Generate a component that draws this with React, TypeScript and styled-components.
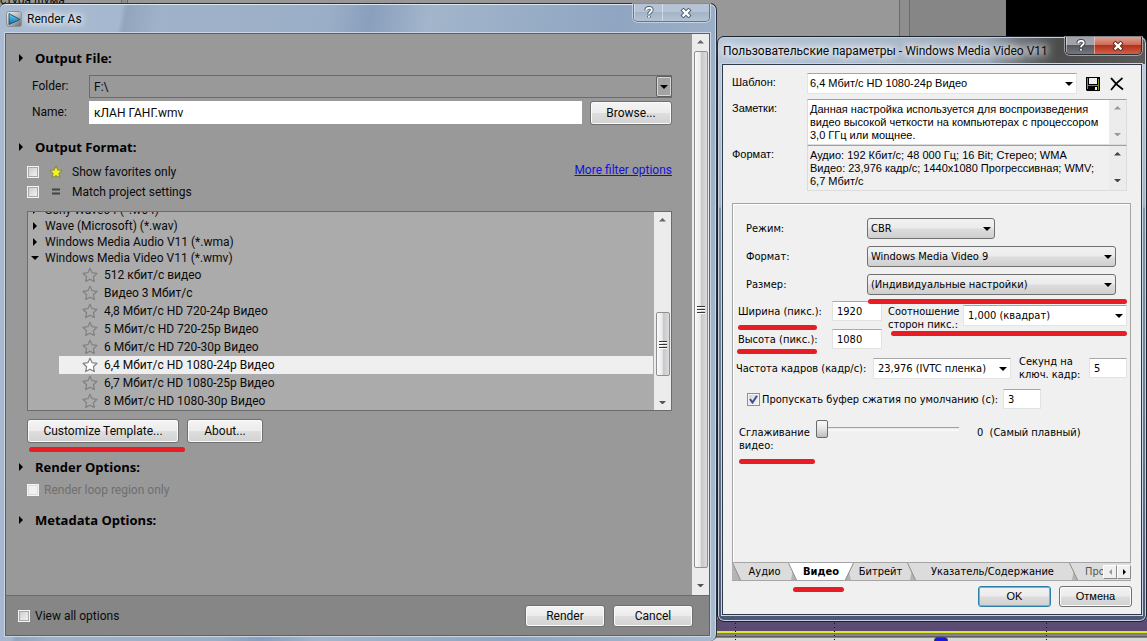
import React from "react";
import styled, { createGlobalStyle, css } from "styled-components";

const uiFont = `Roboto, "Open Sans", sans-serif`;
const headingFont = `"Open Sans", "Noto Sans", sans-serif`;
const dialogFont = `"DejaVu Sans Condensed", "DejaVu Sans", sans-serif`;
const shellFont = `"Liberation Sans", Arial, sans-serif`;

const GlobalStyle = createGlobalStyle`
  * { box-sizing: border-box; }
  html, body { margin: 0; padding: 0; }
  body { font-family: ${uiFont}; font-size: 12px; color: #0a0a0a; background: #999; }
  button, input, select, textarea { font: inherit; color: inherit; margin: 0; border-radius: 0; }
  h1, h2, p, ul { margin: 0; padding: 0; font-size: inherit; font-weight: inherit; }
  ul { list-style: none; }
  svg { display: block; flex: none; }
`;

/* ---------- desktop and the editor behind the dialogs ---------- */

const Desktop = styled.div`
  display: grid;
  grid-template-columns: minmax(0, 1fr) 430px;
  min-height: 100vh;
  overflow: hidden;
`;

const Backdrop = styled.div`
  grid-area: 1 / 1 / 2 / 3;
  display: flex;
  flex-direction: column;
  overflow: hidden;
`;

const Panes = styled.div`
  flex: 1;
  display: flex;
  background: #989898;
`;

const SidePane = styled.div`
  width: 121px;
  height: 4px;
  overflow: hidden;
  display: flex;
  align-items: flex-end;
  font-size: 12px;
  line-height: 8px;
  white-space: nowrap;
`;

const Splitter = styled.div<{ $wide?: boolean }>`
  width: ${(p) => (p.$wide ? 11 : 7)}px;
  border: solid #6c6c6c;
  border-width: 0 1px;
  background: #8e8e8e;
`;

const MainPane = styled.div`
  flex: 1;
`;

const DimPane = styled.div`
  width: 96px;
  background: #868686;
`;

const Preview = styled.div`
  width: 141px;
  background: linear-gradient(#000 45%, #16233a 46%, #8ea2bd 60%, #6d7ba0);
`;

const Timeline = styled.div`
  height: 22px;
  background: linear-gradient(#5c4b74 12px, #e2e62a 12px, #e2e62a 14px, #77757a 14px, #8b8b8b 17px, #333 18px, #d8d8d8 19px);
  display: flex;
  justify-content: flex-end;
`;

const TimelineMarks = styled.div`
  width: 430px;
  display: flex;
  align-items: flex-end;
  padding: 0 100px 0 18px;
  justify-content: space-between;
`;

const Tick = styled.div`
  width: 1px;
  height: 22px;
  background: repeating-linear-gradient(#111 0 1px, transparent 1px 4px);
`;

const Playhead = styled.div`
  width: 14px;
  height: 4px;
  border-radius: 6px 6px 0 0;
  background: #1818e0;
  border: 1px solid #444;
  border-bottom: 0;
`;

/* ---------- window chrome ---------- */

const RenderWindow = styled.section`
  grid-area: 1 / 1 / 2 / 2;
  z-index: 1;
  margin-top: 3px;
  border: 1px solid #27303b;
  border-width: 1px 1px 0 0;
  border-radius: 6px 7px 7px 0;
  padding: 0 6px 5px 5px;
  display: flex;
  flex-direction: column;
  background: linear-gradient(100deg, #a9bcd1 0, #a5b8cf 120px, #93a5bd 126px, #a0b2c9 160px, #9aaec7 40%, #8a9fbd 45%, #a2b5cb 52%, #8fa5c1 75%, #a9bacf);
  box-shadow: inset 0 1px 0 #dfe8f2, inset -1px 0 0 #c9d6e4;
`;

const TemplateWindow = styled.section`
  grid-area: 1 / 2 / 2 / 3;
  z-index: 2;
  align-self: start;
  margin-top: 36px;
  border: 1px solid #1a222c;
  border-radius: 7px;
  padding: 0 4px 6px;
  background:
    linear-gradient(90deg, #b7c7d9 0, #a9b8c9 180px, #9aa8b8 270px, #70767d 300px, #4c4c4c 340px, #5a5a5a) top / 100% 27px no-repeat,
    linear-gradient(#b9cadb 27px, #9fb1c6 170px, #7d93ac 171px, #6a8098 60%, #4d5778);
  box-shadow: inset 0 0 0 1px #c5d0dc;
`;

const TitleBar = styled.header<{ $h: number; $pad: number }>`
  height: ${(p) => p.$h}px;
  padding-left: ${(p) => p.$pad}px;
  display: flex;
  align-items: center;
  gap: 5px;
`;

const Title = styled.h1`
  flex: 1;
  align-self: center;
  font-size: 12px;
  line-height: 16px;
  white-space: nowrap;
  text-shadow: 0 0 6px #fff, 0 0 8px #fff, 0 0 12px #fff;
`;

const Caption = styled.div<{ $dark?: boolean }>`
  align-self: flex-start;
  display: flex;
  height: 18px;
  border: 1px solid ${(p) => (p.$dark ? "#2d3035" : "#65758a")};
  border-top: 0;
  border-radius: 0 0 5px 5px;
  overflow: hidden;
  box-shadow: 0 0 0 1px rgba(255, 255, 255, 0.45);
`;

const captionFill = {
  glass: "linear-gradient(#b5c3d4 45%, #a3b4c8 50%, #b3c3d5)",
  dark: "linear-gradient(#a0a4aa 45%, #55585d 50%, #74787e)",
  red: "linear-gradient(#e0a090 0, #cc6c58 45%, #b3301a 50%, #d2604a)",
};

const CaptionButton = styled.button<{ $fill: keyof typeof captionFill; $w: number }>`
  width: ${(p) => p.$w}px;
  padding: 0;
  border: 0;
  border-left: 1px solid rgba(255, 255, 255, 0.45);
  background: ${(p) => captionFill[p.$fill]};
  display: flex;
  align-items: center;
  justify-content: center;
`;

const Client = styled.div<{ $light?: boolean }>`
  flex: 1;
  display: flex;
  flex-direction: column;
  border: 1px solid ${(p) => (p.$light ? "#2f3a48" : "#59616b")};
  background: ${(p) => (p.$light ? "#f0f0f0" : "#999")};
  box-shadow: 0 0 0 1px #c8d6e6;
`;

/* ---------- shared pieces ---------- */

const Mark = styled.span<{ $top: number; $left: number; $right: number }>`
  position: absolute;
  z-index: 3;
  top: ${(p) => p.$top}px;
  left: ${(p) => p.$left}px;
  right: ${(p) => p.$right}px;
  height: 5px;
  border-radius: 3px;
  background: #e81c24;
  pointer-events: none;
`;

const Anchor = styled.div`
  position: relative;
  display: flex;
`;

const Track = styled.div<{ $framed?: boolean }>`
  width: 17px;
  flex: none;
  display: flex;
  flex-direction: column;
  align-items: center;
  justify-content: space-between;
  background: #ececec;
  padding: ${(p) => (p.$framed ? "6px 0" : "6px 0 8px")};
`;

const Thumb = styled.div<{ $grow?: boolean }>`
  width: 14px;
  ${(p) => (p.$grow ? "flex: 1; margin: 7px 0 16px;" : "height: 64px; margin: 66px 0 0;")}
  border: 1px solid #8f8f8f;
  border-radius: 2px;
  background: linear-gradient(90deg, #fafafa, #e9e9e9 45%, #c6c7ca 50%, #dcdcde);
  display: flex;
  align-items: center;
  justify-content: center;
`;

const Grip = () => (
  <svg width="8" height="9" viewBox="0 0 8 9" aria-hidden="true">
    <path d="M0 1.5h8M0 4.5h8M0 7.5h8" stroke="#333" />
    <path d="M0 2.5h8M0 5.5h8M0 8.5h8" stroke="#fff" />
  </svg>
);

const Arrow = ({ dir, color = "#000", size = 8 }: { dir: "up" | "down" | "right" | "left"; color?: string; size?: number }) => {
  const h = size / 2;
  if (dir === "up" || dir === "down")
    return (
      <svg width={size} height={h} viewBox="0 0 8 4" aria-hidden="true">
        <path d={dir === "up" ? "M0 4L4 0L8 4Z" : "M0 0H8L4 4Z"} fill={color} />
      </svg>
    );
  return (
    <svg width={h} height={size} viewBox="0 0 4 8" aria-hidden="true">
      <path d={dir === "right" ? "M0 0L4 4L0 8Z" : "M4 0L0 4L4 8Z"} fill={color} />
    </svg>
  );
};

const PushButton = styled.button<{ $w: number }>`
  min-width: ${(p) => p.$w}px;
  height: 24px;
  padding: 0 8px;
  border: 1px solid #707070;
  border-radius: 3px;
  background: linear-gradient(#f4f4f4, #ececec 48%, #dedede 52%, #d2d2d2);
  box-shadow: inset 0 0 0 1px #fbfbfb;
  line-height: 16px;
  white-space: nowrap;
`;

const Tick13 = styled.input`
  appearance: none;
  flex: none;
  width: 12px;
  height: 12px;
  border: 1px solid #f4f4f4;
  outline: 1px solid #a9a9a9;
  outline-offset: -2px;
  background: linear-gradient(135deg, #c9ccd0, #f4f4f4);
  &:disabled { background: #f0f2f2; outline-color: #dcdcdc; }
`;

/* ---------- Render As ---------- */

const ScrollPane = styled.div`
  flex: 1;
  display: flex;
`;

const RenderBody = styled.div`
  flex: 1;
  min-width: 0;
  padding: 15px 20px 0 13px;
`;

const SectionHead = styled.h2<{ $gap?: number }>`
  display: flex;
  align-items: center;
  gap: 12px;
  height: 18px;
  margin-top: ${(p) => p.$gap ?? 0}px;
  font-family: ${headingFont};
  font-size: 13px;
  line-height: 18px;
  font-weight: 700;
  color: #000;
`;

const SectionBody = styled.div<{ $gap: number }>`
  padding-left: 8px;
  margin-top: ${(p) => p.$gap}px;
`;

const FieldRow = styled.div`
  display: flex;
  height: 23px;
  margin-bottom: 3px;
  padding-left: 5px;
  &:last-child { margin-bottom: 0; }
`;

const FieldLabel = styled.label`
  width: 57px;
  line-height: 23px;
`;

const FolderBox = styled.div`
  position: relative;
  flex: 1;
  display: flex;
`;

const FolderSelect = styled.select`
  appearance: none;
  flex: 1;
  padding: 0 4px;
  border: 1px solid #6c6c6c;
  background: #999;
`;

const FolderDrop = styled.span`
  position: absolute;
  right: 0;
  top: 1px;
  bottom: 1px;
  width: 16px;
  border: 1px solid #5f5f5f;
  border-radius: 2px;
  box-shadow: inset 0 0 0 1px #d6d6d6;
  background: #a3a3a3;
  display: flex;
  align-items: center;
  justify-content: center;
  pointer-events: none;
`;

const NameInput = styled.input`
  flex: 1;
  min-width: 0;
  padding: 0 5px;
  border: 0;
  background: #fff;
  margin-right: 8px;
`;

const FilterBlock = styled.div`
  display: flex;
  justify-content: space-between;
  align-items: flex-start;
`;

const CheckRow = styled.label<{ $off?: boolean }>`
  display: flex;
  align-items: center;
  height: 20px;
  gap: 5px;
  line-height: 16px;
  color: ${(p) => (p.$off ? "#6f6f6f" : "inherit")};
`;

const IconSlot = styled.span`
  width: 18px;
  margin-left: 5px;
  padding-right: 4px;
  display: flex;
  justify-content: center;
`;

const FilterLink = styled.a`
  color: #1412d8;
  line-height: 17px;
`;

const TreeBox = styled.div`
  margin-top: 9px;
  height: 200px;
  display: flex;
  border: 1px solid #6c6c6c;
  background: #ababab;
  overflow: hidden;
`;

const Tree = styled.ul`
  flex: 1;
  margin-top: -10px;
  padding-right: 1px;
`;

const TreeGroup = styled.li`
  height: 16px;
  padding-left: 2px;
  display: flex;
  align-items: center;
  line-height: 16px;
`;

const Twisty = styled.span`
  width: 9px;
  margin-right: 6px;
  display: flex;
  justify-content: center;
`;

const TreeLeaf = styled.li<{ $on?: boolean }>`
  height: 18px;
  margin-left: 31px;
  padding-left: 23px;
  display: flex;
  align-items: center;
  gap: 6px;
  line-height: 18px;
  background: ${(p) => (p.$on ? "#efefef" : "transparent")};
`;

const ButtonRow = styled.div`
  display: flex;
  gap: 8px;
  margin-top: 8px;
`;

const RenderFooter = styled.footer`
  height: 40px;
  border-top: 1px solid #6b6b6b;
  background: #868686;
  padding: 0 16px 0 12px;
  display: flex;
  align-items: center;
  justify-content: space-between;
`;

const FooterButtons = styled.div`
  display: flex;
  gap: 8px;
  button { height: 22px; }
`;

/* ---------- template dialog ---------- */

const TemplateForm = styled.div`
  padding: 8px 10px 7px 9px;
  font-family: ${dialogFont};
  font-size: 11px;
  line-height: 13px;
  color: #000;
`;

const TopRow = styled.div<{ $gap?: number }>`
  display: flex;
  margin-top: ${(p) => p.$gap ?? 0}px;
  padding-right: 4px;
  font-family: ${shellFont};
`;

const TopLabel = styled.label`
  width: 75px;
  padding-top: 3px;
`;

const comboSkin = {
  flat: css`
    border: 1px solid #e4e4e4;
    border-top-color: #a6a6aa;
    background: #fff;
    font-family: inherit;
  `,
  raised: css`
    border: 1px solid #707070;
    border-radius: 3px;
    background: linear-gradient(#f2f2f2, #ebebeb 48%, #dddddd 52%, #cfcfcf);
  `,
};

const ComboBox = styled.div<{ $w?: number }>`
  position: relative;
  display: flex;
  height: 21px;
  ${(p) => (p.$w ? `width: ${p.$w}px;` : "flex: 1;")}
  svg { position: absolute; right: 4px; top: 9px; pointer-events: none; }
`;

const ComboSelect = styled.select<{ $skin: keyof typeof comboSkin; $pad?: number }>`
  appearance: none;
  flex: 1;
  min-width: 0;
  padding: 0 14px 0 ${(p) => p.$pad ?? 3}px;
  line-height: 13px;
  ${(p) => comboSkin[p.$skin]}
`;

const ToolButton = styled.button`
  width: 15px;
  height: 21px;
  margin-left: 9px;
  padding: 0;
  border: 0;
  background: none;
  display: flex;
  align-items: center;
  &:last-child { margin-right: 2px; }
`;

const MemoFrame = styled.div<{ $readonly?: boolean }>`
  flex: 1;
  height: 46px;
  display: flex;
  border: 1px solid #dcdcdc;
  border-top-color: #a0a0a4;
  background: ${(p) => (p.$readonly ? "#f0f0f0" : "#fff")};
`;

const Memo = styled.textarea`
  flex: 1;
  min-width: 0;
  padding: 3px 0 0 2px;
  border: 0;
  resize: none;
  overflow: hidden;
  background: transparent;
  line-height: 13px;
  white-space: pre;
`;

const TabPanel = styled.div`
  min-height: 360px;
  margin-top: 12px;
  border: 1px solid #a5a5a5;
  box-shadow: inset 1px 1px 0 #fff;
  padding: 14px 3px 0;
`;

const OptionRow = styled.div`
  display: flex;
  align-items: center;
  margin: 0 11px 7px 10px;
`;

const OptionLabel = styled.label`
  width: 121px;
`;

const SelectAnchor = styled(Anchor)`
  flex: 1;
`;

const SizeBlock = styled.div`
  display: flex;
  gap: 6px;
  margin-top: -1px;
  padding-left: 2px;
`;

const SizeColumn = styled.div`
  display: flex;
  flex-direction: column;
  gap: 8px;
`;

const SizeRow = styled.div`
  position: relative;
  display: flex;
  align-items: center;
`;

const SizeLabel = styled.label`
  width: 94px;
  white-space: nowrap;
`;

const NumberBox = styled.input<{ $w: number; $gap?: number }>`
  width: ${(p) => p.$w}px;
  height: 20px;
  margin-left: ${(p) => p.$gap ?? 0}px;
  padding: 0 4px;
  border: 1px solid #e2e2e2;
  border-top-color: #a9a9ad;
  background: #fff;
`;

const AspectGroup = styled.div`
  position: relative;
  align-self: flex-start;
  flex: 1;
  display: flex;
  align-items: flex-start;
  margin-top: 4px;
`;

const TwoLine = styled.label<{ $w: number }>`
  width: ${(p) => p.$w}px;
  white-space: pre;
`;

const RateRow = styled.div`
  display: flex;
  align-items: center;
  margin-top: 6px;
`;

const RateLabel = styled.label`
  flex: 1;
  white-space: nowrap;
`;

const BufferRow = styled.div`
  display: flex;
  align-items: center;
  margin: 8px 0 10px 11px;
`;

const BufferLabel = styled.label`
  width: 243px;
  padding-left: 2px;
  white-space: nowrap;
`;

const CheckFrame = styled.span`
  position: relative;
  display: flex;
  svg { position: absolute; left: 2px; top: 2px; pointer-events: none; }
`;

const DialogCheck = styled.input`
  appearance: none;
  width: 13px;
  height: 13px;
  border: 1px solid #8e8f8f;
  background: linear-gradient(135deg, #cfd3da, #f6f6f6);
  box-shadow: inset 0 0 0 1px #f4f4f4;
`;

const SmoothRow = styled.div`
  display: flex;
  align-items: flex-start;
  padding-left: 3px;
`;

const SmoothLabel = styled.div`
  position: relative;
  width: 77px;
  padding-top: 7px;
  white-space: pre;
`;

const Slider = styled.input`
  appearance: none;
  width: 143px;
  height: 20px;
  background: transparent;
  &::-webkit-slider-runnable-track {
    height: 4px;
    background: linear-gradient(#a0a0a0 1px, #e9e9e9 1px, #fff);
  }
  &::-webkit-slider-thumb {
    appearance: none;
    width: 12px;
    height: 18px;
    margin-top: -7px;
    border: 1px solid #6a6a6a;
    border-radius: 2px;
    background: linear-gradient(#fafafa, #e4e4e4 50%, #bcbcbc);
  }
`;

const SmoothValue = styled.output`
  padding: 7px 0 0 18px;
  white-space: pre;
`;

const TabStrip = styled.div`
  display: flex;
  height: 18px;
  background: #dcdcdc;
  border: solid #a5a5a5;
  border-width: 0 0 1px;
`;

const Tab = styled.button<{ $w: number; $on?: boolean }>`
  position: relative;
  width: ${(p) => p.$w}px;
  padding: 0;
  border: 0;
  background: ${(p) => (p.$on ? "#fff" : "transparent")};
  font-weight: ${(p) => (p.$on ? 700 : 400)};
  line-height: 17px;
  white-space: nowrap;
`;

const CutTab = styled(Tab)`
  flex: 1;
  overflow: hidden;
  padding-left: 7px;
  text-align: left;
  color: #555;
`;

const TabArrow = styled.button`
  width: 14px;
  height: 14px;
  margin-top: 2px;
  padding: 0;
  border: 1px solid #8a8a8a;
  border-left-color: #fff;
  border-top-color: #fff;
  background: #f0f0f0;
  display: flex;
  align-items: center;
  justify-content: center;
`;

const DialogButtons = styled.div`
  display: flex;
  justify-content: flex-end;
  gap: 8px;
  margin: 5px -1px 0 0;
`;

const DialogButton = styled.button<{ $primary?: boolean }>`
  width: 73px;
  height: 21px;
  padding: 0;
  font-family: ${shellFont};
  border: 1px solid ${(p) => (p.$primary ? "#2c7fa8" : "#707070")};
  border-radius: 3px;
  background: linear-gradient(#f3f3f3, #ebebeb 48%, #dddddd 52%, #d0d0d0);
  box-shadow: inset 0 0 0 1px ${(p) => (p.$primary ? "#4ac4ef" : "#fbfbfb")};
`;

/* ---------- drawings ---------- */

const AppIcon = () => (
  <svg width="16" height="16" viewBox="0 0 16 16" aria-hidden="true">
    <defs>
      <linearGradient id="plate" x1="0" y1="0" x2="1" y2="1">
        <stop offset="0" stopColor="#f4f4f4" />
        <stop offset="0.5" stopColor="#b9bcc0" />
        <stop offset="1" stopColor="#5e6267" />
      </linearGradient>
      <linearGradient id="play" x1="0" y1="0" x2="0" y2="1">
        <stop offset="0" stopColor="#6bd0ee" />
        <stop offset="1" stopColor="#0b6fb4" />
      </linearGradient>
    </defs>
    <rect x="0.5" y="0.5" width="15" height="15" rx="2.5" fill="url(#plate)" stroke="#8b9097" />
    <path d="M3 2.5L14 8.5L3 13.5Z" fill="url(#play)" stroke="#14415f" strokeWidth="0.8" />
  </svg>
);

const HelpGlyph = ({ tone }: { tone: string }) => (
  <svg width="10" height="13" viewBox="0 0 10 13" fill="none" aria-hidden="true">
    <path d="M2.2 4.2C2.2 1 7.8 1 7.8 4C7.8 6 5 6 5 8.4M5 9.8V11.6" stroke={tone} strokeWidth="3.6" />
    <path d="M2.2 4.2C2.2 1 7.8 1 7.8 4C7.8 6 5 6 5 8.2M5 10V11.6" stroke="#fff" strokeWidth="1.8" />
  </svg>
);

const CloseGlyph = ({ tone }: { tone: string }) => (
  <svg width="12" height="10" viewBox="0 0 12 10" fill="none" aria-hidden="true">
    <path d="M2 1L10 9M10 1L2 9" stroke={tone} strokeWidth="4.2" />
    <path d="M2.6 1.6L9.4 8.4M9.4 1.6L2.6 8.4" stroke="#fff" strokeWidth="2.2" />
  </svg>
);

const starPath = "M8 1.2L10.1 5.7L15 6.3L11.4 9.7L12.3 14.6L8 12.2L3.7 14.6L4.6 9.7L1 6.3L5.9 5.7Z";

const Star = ({ gold, on }: { gold?: boolean; on?: boolean }) => (
  <svg width={gold ? 14 : 16} height={gold ? 14 : 16} viewBox="0 0 16 16" aria-hidden="true">
    <path
      d={starPath}
      fill={gold ? "#f1f51e" : on ? "#fff" : "none"}
      stroke={gold ? "#8a8b4a" : "#808080"}
      strokeWidth="1.2"
      strokeLinejoin="round"
    />
  </svg>
);

const EqualsIcon = () => (
  <svg width="10" height="8" viewBox="0 0 10 8" aria-hidden="true">
    <path d="M1 1.5H9M1 5.5H9" stroke="#444" strokeWidth="2" />
  </svg>
);

const DiskIcon = () => (
  <svg width="14" height="14" viewBox="0 0 14 14" aria-hidden="true">
    <path d="M0 0H14V14H1L0 13Z" fill="#000" />
    <path d="M1 1H2V12H1ZM12 2H13V13H12ZM2 8H12V9H2Z" fill="#8a8a22" />
    <path d="M3 1H11V7H3Z" fill="#f0f0f0" />
    <path d="M9 10H11V13H9Z" fill="#f0f0f0" />
  </svg>
);

const DeleteIcon = () => (
  <svg width="14" height="14" viewBox="0 0 14 14" fill="none" aria-hidden="true">
    <path d="M1 1C4 5 8 9 13 12.5" stroke="#000" strokeWidth="2" />
    <path d="M12.5 1C8 4.500 4 8.500 1 13" stroke="#000" strokeWidth="1.600" />
  </svg>
);

const TabEdge = ({ kind }: { kind: "start" | "intoActive" | "outOfActive" | "plain" }) => (
  <svg width="9" height="17" viewBox="0 0 9 17" aria-hidden="true">
    {kind === "start" && <path d="M0 0L8.500 17H0Z" fill="#b4b4b4" />}
    {kind === "intoActive" && <path d="M0 0H9V17H8.500Z" fill="#fff" />}
    {kind === "intoActive" && <path d="M8.500 17L4.500 9L3 17Z" fill="#b4b4b4" />}
    {kind === "outOfActive" && <path d="M0 0H8.500L4 9L0 17Z" fill="#fff" />}
    {kind === "outOfActive" && <path d="M0 17L4 9L6 17Z" fill="#b4b4b4" />}
    {kind === "plain" && <path d="M8.500 17L4.500 9L3 17Z" fill="#b4b4b4" />}
    <path d={kind === "outOfActive" ? "M8.500 0L0.500 17" : "M0.500 0L8.500 17"} stroke="#8d8d8d" fill="none" />
  </svg>
);

/* ---------- data ---------- */

const groups = [
  { name: "Sony Wave64 (*.w64)", open: false },
  { name: "Wave (Microsoft) (*.wav)", open: false },
  { name: "Windows Media Audio V11 (*.wma)", open: false },
  { name: "Windows Media Video V11 (*.wmv)", open: true },
];

const templates = [
  "512 кбит/с видео",
  "Видео 3 Мбит/с",
  "4,8 Мбит/с HD 720-24p Видео",
  "5 Мбит/с HD 720-25p Видео",
  "6 Мбит/с HD 720-30p Видео",
  "6,4 Мбит/с HD 1080-24p Видео",
  "6,7 Мбит/с HD 1080-25p Видео",
  "8 Мбит/с HD 1080-30p Видео",
];
const current = templates[5];

const notes =
  "Данная настройка используется для воспроизведения\nвидео высокой четкости на компьютерах с процессором\n3,0 ГГц или мощнее.";
const format =
  "Аудио: 192 Кбит/с; 48 000 Гц; 16 Bit; Стерео; WMA\nВидео: 23,976 кадр/с; 1440x1080 Прогрессивная; WMV;\n6,7 Мбит/с";

/* ---------- views ---------- */

type ComboProps = { id: string; value: string; skin: keyof typeof comboSkin; w?: number; pad?: number };

const Combo = ({ id, value, skin, w, pad }: ComboProps) => (
  <ComboBox $w={w}>
    <ComboSelect id={id} $skin={skin} $pad={pad} defaultValue={value}>
      <option>{value}</option>
    </ComboSelect>
    <Arrow dir="down" />
  </ComboBox>
);

const Heading = ({ children, gap }: { children: string; gap?: number }) => (
  <SectionHead $gap={gap}>
    <Arrow dir="right" />
    {children}
  </SectionHead>
);

const RenderAs = () => (
  <RenderWindow aria-label="Render As">
    <TitleBar $h={29} $pad={1}>
      <AppIcon />
      <Title>Render As</Title>
      <Caption>
        <CaptionButton $fill="glass" $w={28} aria-label="Help"><HelpGlyph tone="#4d5a6b" /></CaptionButton>
        <CaptionButton $fill="glass" $w={47} aria-label="Close"><CloseGlyph tone="#4d5a6b" /></CaptionButton>
      </Caption>
    </TitleBar>
    <Client>
      <ScrollPane>
        <RenderBody>
          <Heading>Output File:</Heading>
          <SectionBody $gap={8}>
            <FieldRow>
              <FieldLabel htmlFor="folder">Folder:</FieldLabel>
              <FolderBox>
                <FolderSelect id="folder" defaultValue="F:\"><option>F:\</option></FolderSelect>
                <FolderDrop><Arrow dir="down" /></FolderDrop>
              </FolderBox>
            </FieldRow>
            <FieldRow>
              <FieldLabel htmlFor="name">Name:</FieldLabel>
              <NameInput id="name" defaultValue="кЛАН ГАНГ.wmv" />
              <PushButton $w={82}>Browse...</PushButton>
            </FieldRow>
          </SectionBody>
          <Heading gap={14}>Output Format:</Heading>
          <SectionBody $gap={6}>
            <FilterBlock>
              <div>
                <CheckRow>
                  <Tick13 type="checkbox" />
                  <IconSlot><Star gold /></IconSlot>
                  Show favorites only
                </CheckRow>
                <CheckRow>
                  <Tick13 type="checkbox" />
                  <IconSlot><EqualsIcon /></IconSlot>
                  Match project settings
                </CheckRow>
              </div>
              <FilterLink href="#filters">More filter options</FilterLink>
            </FilterBlock>
            <TreeBox>
              <Tree>
                {groups.map((g) => (
                  <TreeGroup key={g.name}>
                    <Twisty><Arrow dir={g.open ? "down" : "right"} /></Twisty>
                    {g.name}
                  </TreeGroup>
                ))}
                {templates.map((t) => (
                  <TreeLeaf key={t} $on={t === current}>
                    <Star on={t === current} />
                    {t}
                  </TreeLeaf>
                ))}
              </Tree>
              <Track $framed>
                <Arrow dir="up" color="#666" size={7} />
                <Thumb><Grip /></Thumb>
                <Arrow dir="down" color="#555" size={7} />
              </Track>
            </TreeBox>
            <ButtonRow>
              <Anchor>
                <PushButton $w={152}>Customize Template...</PushButton>
                <Mark $top={28} $left={2} $right={-6} />
              </Anchor>
              <PushButton $w={76}>About...</PushButton>
            </ButtonRow>
          </SectionBody>
          <Heading gap={15}>Render Options:</Heading>
          <SectionBody $gap={4}>
            <CheckRow $off>
              <Tick13 type="checkbox" disabled />
              Render loop region only
            </CheckRow>
          </SectionBody>
          <Heading gap={11}>Metadata Options:</Heading>
        </RenderBody>
        <Track>
          <Arrow dir="up" color="#666" size={7} />
          <Thumb $grow><Grip /></Thumb>
          <Arrow dir="down" color="#555" size={7} />
        </Track>
      </ScrollPane>
      <RenderFooter>
        <CheckRow>
          <Tick13 type="checkbox" />
          View all options
        </CheckRow>
        <FooterButtons>
          <PushButton $w={80}>Render</PushButton>
          <PushButton $w={80}>Cancel</PushButton>
        </FooterButtons>
      </RenderFooter>
    </Client>
  </RenderWindow>
);

const TemplateDialog = () => (
  <TemplateWindow aria-label="Пользовательские параметры">
    <TitleBar $h={27} $pad={1}>
      <Title>Пользовательские параметры - Windows Media Video V11</Title>
      <Caption $dark>
        <CaptionButton $fill="dark" $w={28} aria-label="Help"><HelpGlyph tone="#3a3d42" /></CaptionButton>
        <CaptionButton $fill="red" $w={47} aria-label="Close"><CloseGlyph tone="#5c2a20" /></CaptionButton>
      </Caption>
    </TitleBar>
    <Client $light>
      <TemplateForm>
        <TopRow>
          <TopLabel htmlFor="template">Шаблон:</TopLabel>
          <Combo id="template" value={current} skin="flat" pad={2} />
          <ToolButton aria-label="Сохранить"><DiskIcon /></ToolButton>
          <ToolButton aria-label="Удалить"><DeleteIcon /></ToolButton>
        </TopRow>
        <TopRow $gap={5}>
          <TopLabel htmlFor="notes">Заметки:</TopLabel>
          <MemoFrame>
            <Memo id="notes" defaultValue={notes} />
            <Track><Arrow dir="up" color="#999" size={7} /><Arrow dir="down" color="#999" size={7} /></Track>
          </MemoFrame>
        </TopRow>
        <TopRow>
          <TopLabel htmlFor="summary">Формат:</TopLabel>
          <MemoFrame $readonly>
            <Memo id="summary" readOnly defaultValue={format} />
            <Track><Arrow dir="up" color="#444" size={7} /><Arrow dir="down" color="#444" size={7} /></Track>
          </MemoFrame>
        </TopRow>

        <TabPanel>
          <OptionRow>
            <OptionLabel htmlFor="mode">Режим:</OptionLabel>
            <Combo id="mode" value="CBR" skin="raised" w={128} />
          </OptionRow>
          <OptionRow>
            <OptionLabel htmlFor="codec">Формат:</OptionLabel>
            <Combo id="codec" value="Windows Media Video 9" skin="raised" />
          </OptionRow>
          <OptionRow>
            <OptionLabel htmlFor="size">Размер:</OptionLabel>
            <SelectAnchor>
              <Combo id="size" value="(Индивидуальные настройки)" skin="raised" />
              <Mark $top={25} $left={1} $right={-11} />
            </SelectAnchor>
          </OptionRow>

          <SizeBlock>
            <SizeColumn>
              <SizeRow>
                <SizeLabel htmlFor="w">Ширина (пикс.):</SizeLabel>
                <NumberBox id="w" $w={50} defaultValue="1920" />
                <Mark $top={24} $left={0} $right={65} />
              </SizeRow>
              <SizeRow>
                <SizeLabel htmlFor="h">Высота (пикс.):</SizeLabel>
                <NumberBox id="h" $w={50} defaultValue="1080" />
                <Mark $top={20} $left={-1} $right={65} />
              </SizeRow>
            </SizeColumn>
            <AspectGroup>
              <TwoLine htmlFor="aspect" $w={75}>{"Соотношение\nсторон пикс.:"}</TwoLine>
              <Combo id="aspect" value="1,000 (квадрат)" skin="flat" pad={4} />
              <Mark $top={26} $left={3} $right={0} />
            </AspectGroup>
          </SizeBlock>

          <RateRow>
            <RateLabel htmlFor="fps">Частота кадров (кадр/с):</RateLabel>
            <Combo id="fps" value="23,976 (IVTC пленка)" skin="flat" pad={4} w={138} />
            <KeyFrameField />
          </RateRow>

          <BufferRow>
            <CheckFrame>
              <DialogCheck id="buf" type="checkbox" defaultChecked />
              <svg width="9" height="9" viewBox="0 0 9 9" aria-hidden="true">
                <path d="M1 4L3.500 7.500L8 0.800" fill="none" stroke="#3c4f8f" strokeWidth="2" />
              </svg>
            </CheckFrame>
            <BufferLabel htmlFor="buf">Пропускать буфер сжатия по умолчанию (с):</BufferLabel>
            <NumberBox aria-label="Буфер, с" $w={38} defaultValue="3" />
          </BufferRow>

          <SmoothRow>
            <SmoothLabel>
              <label htmlFor="smooth">{"Сглаживание\nвидео:"}</label>
              <Mark $top={40} $left={0} $right={1} />
            </SmoothLabel>
            <Slider id="smooth" type="range" min={0} max={100} defaultValue={0} />
            <SmoothValue htmlFor="smooth">0  (Самый плавный)</SmoothValue>
          </SmoothRow>
        </TabPanel>

        <TabStrip role="tablist">
          <TabEdge kind="start" />
          <Tab role="tab" $w={47}>Аудио</Tab>
          <TabEdge kind="intoActive" />
          <Tab role="tab" aria-selected $w={48} $on>
            Видео
            <Mark $top={24} $left={-4} $right={1} />
          </Tab>
          <TabEdge kind="outOfActive" />
          <Tab role="tab" $w={53}>Битрейт</Tab>
          <TabEdge kind="plain" />
          <Tab role="tab" $w={153}>Указатель/Содержание</Tab>
          <TabEdge kind="plain" />
          <CutTab role="tab" $w={24}>Прочее</CutTab>
          <TabArrow aria-label="Назад"><Arrow dir="left" color="#999" size={6} /></TabArrow>
          <TabArrow aria-label="Вперёд"><Arrow dir="right" size={6} /></TabArrow>
        </TabStrip>

        <DialogButtons>
          <DialogButton $primary>OK</DialogButton>
          <DialogButton>Отмена</DialogButton>
        </DialogButtons>
      </TemplateForm>
    </Client>
  </TemplateWindow>
);

const KeyGroup = styled.div`
  display: flex;
  align-items: center;
  padding-left: 8px;
`;

function KeyFrameField() {
  return (
    <KeyGroup>
      <TwoLine htmlFor="key" $w={70}>{"Секунд на\nключ. кадр:"}</TwoLine>
      <NumberBox id="key" $w={38} defaultValue="5" />
    </KeyGroup>
  );
}

export default function App() {
  return (
    <>
      <GlobalStyle />
      <Desktop>
        <Backdrop aria-hidden="true">
          <Panes>
            <SidePane>стура шума</SidePane>
            <Splitter />
            <MainPane />
            <Splitter $wide />
            <DimPane />
            <Preview />
          </Panes>
          <Timeline>
            <TimelineMarks>
              <Tick />
              <Tick />
              <Playhead />
              <Tick />
            </TimelineMarks>
          </Timeline>
        </Backdrop>
        <RenderAs />
        <TemplateDialog />
      </Desktop>
    </>
  );
}
